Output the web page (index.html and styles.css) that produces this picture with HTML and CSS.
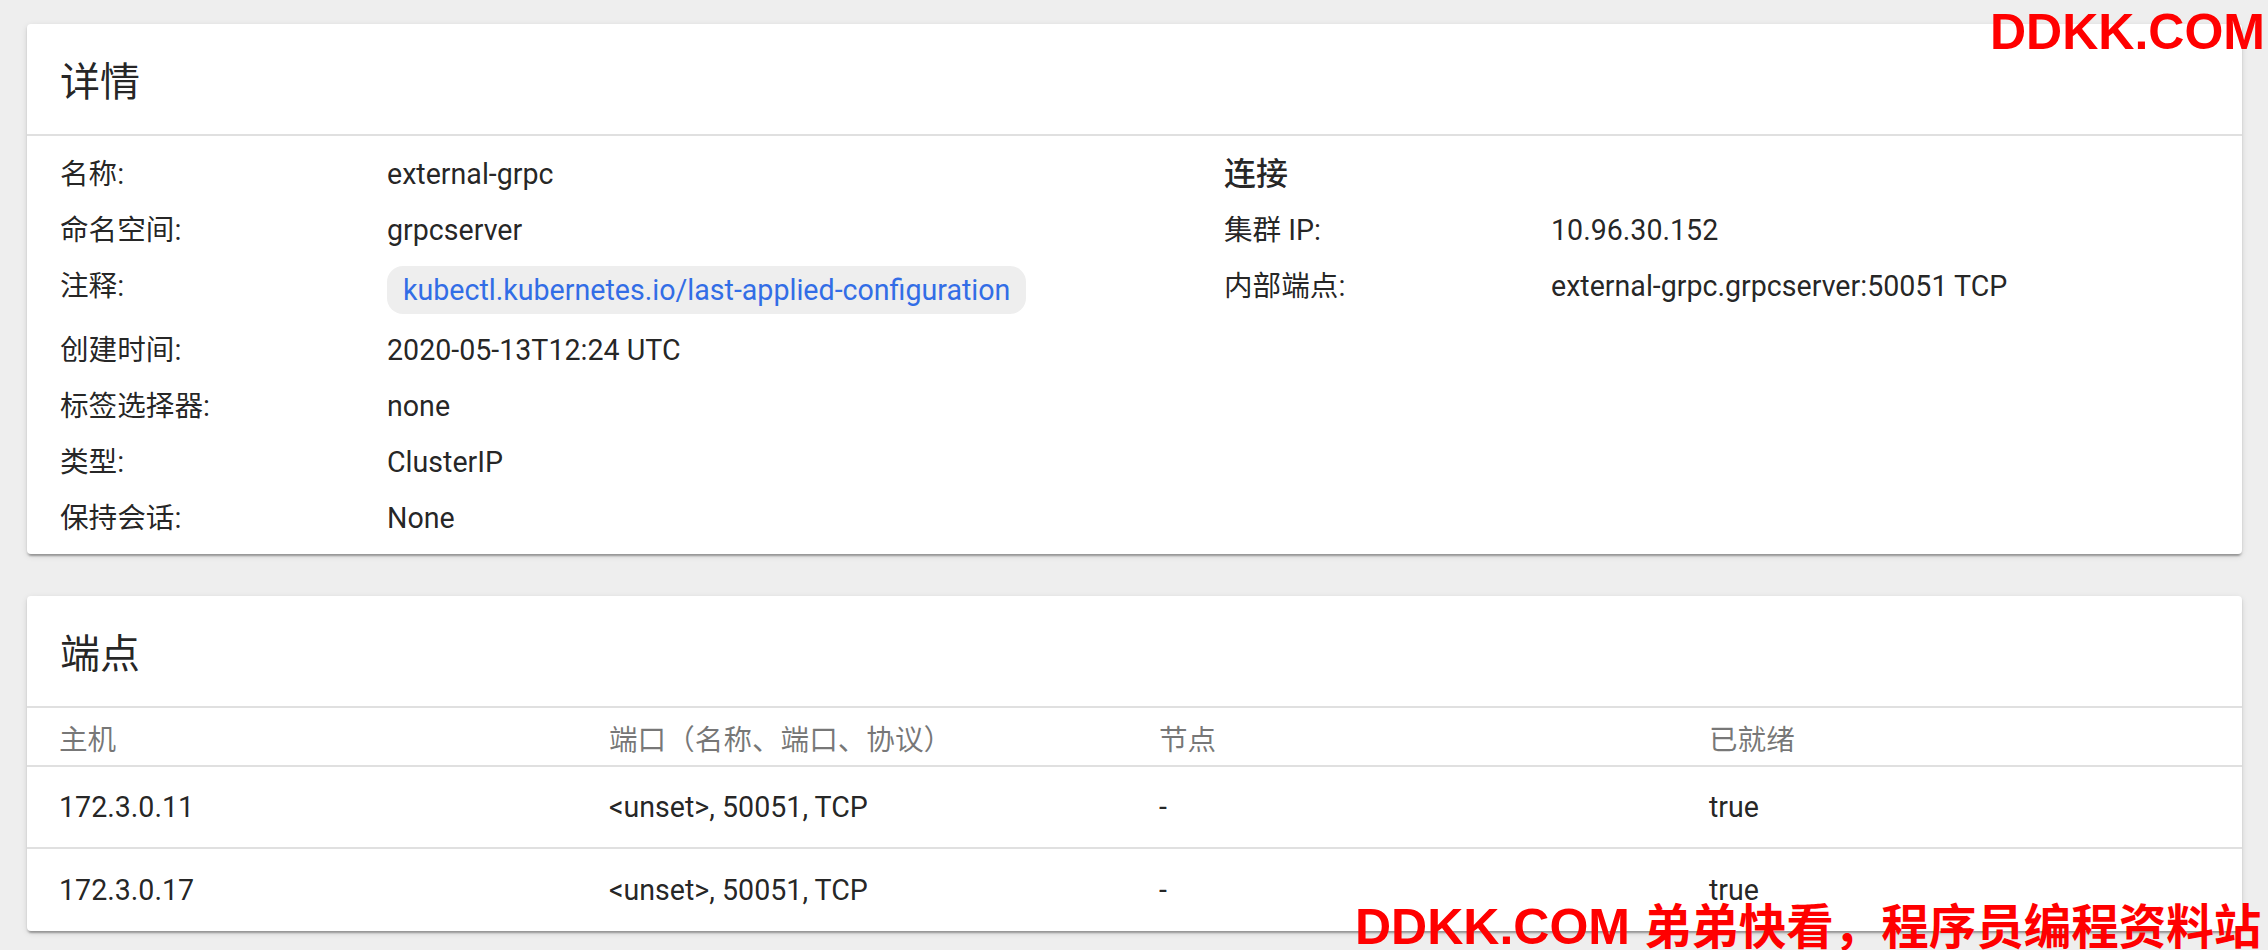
FILE: index.html
```html
<!DOCTYPE html>
<html>

<head>
    <title>external-grpc</title>
    <link rel="stylesheet" href="styles.css">
</head>

<body>
<div class="page">

    <div class="card">
        <div class="card-title">详情</div>
        <div class="details">
            <div class="section">
                <div class="row"><span class="label">名称:</span><span class="value">external-grpc</span></div>
                <div class="row"><span class="label">命名空间:</span><span class="value">grpcserver</span></div>
                <div class="row"><span class="label">注释:</span><span class="value"><span class="chip">kubectl.kubernetes.io/last-applied-configuration</span></span></div>
                <div class="row"><span class="label">创建时间:</span><span class="value">2020-05-13T12:24 UTC</span></div>
                <div class="row"><span class="label">标签选择器:</span><span class="value">none</span></div>
                <div class="row"><span class="label">类型:</span><span class="value">ClusterIP</span></div>
                <div class="row"><span class="label">保持会话:</span><span class="value">None</span></div>
            </div>
            <div class="section">
                <div class="row"><span class="subhead">连接</span></div>
                <div class="row"><span class="label">集群 IP:</span><span class="value">10.96.30.152</span></div>
                <div class="row"><span class="label">内部端点:</span><span class="value">external-grpc.grpcserver:50051 TCP</span></div>
            </div>
        </div>
    </div>

    <div class="card">
        <div class="card-title">端点</div>
        <div class="table">
            <div class="tr th">
                <span>主机</span>
                <span>端口（名称、端口、协议）</span>
                <span>节点</span>
                <span>已就绪</span>
            </div>
            <div class="tr">
                <span>172.3.0.11</span>
                <span>&lt;unset&gt;, 50051, TCP</span>
                <span>-</span>
                <span>true</span>
            </div>
            <div class="tr">
                <span>172.3.0.17</span>
                <span>&lt;unset&gt;, 50051, TCP</span>
                <span>-</span>
                <span>true</span>
            </div>
        </div>
    </div>

</div>

<div class="mark mark-top">DDKK.COM</div>
<div class="mark mark-bottom">DDKK.COM <span class="mark-cn">弟弟快看，程序员编程资料站</span></div>
</body>
</html>
```

FILE: styles.css
```css
* {
    box-sizing: border-box;
}
body, html {
    padding: 0;
    margin: 0;
    overflow: hidden;
}
body {
    position: relative;
    height: 950px;
    background-color: #eeeeee;
    color: rgba(0,0,0,0.87);
    font-family: Roboto, "Noto Sans CJK SC", sans-serif;
    font-size: 28.6px;
}
.page {
    padding: 24px 26px 0 27px;
}
.card {
    background-color: #fff;
    border-radius: 4px;
    box-shadow: 0 4px 2px -2px rgba(0,0,0,0.2), 0 2px 2px 0 rgba(0,0,0,0.14), 0 2px 6px 0 rgba(0,0,0,0.12);
    margin-bottom: 42px;
}
.card-title {
    height: 112px;
    display: flex;
    align-items: center;
    padding: 0 33px;
    font-size: 40px;
    border-bottom: 2px solid #e0e0e0;
}
.details {
    display: grid;
    grid-template-columns: 1164px 1fr;
    padding: 18px 33px 16px;
}
.row {
    display: grid;
    grid-template-columns: 327px 1fr;
    align-items: start;
    line-height: 40px;
    margin-bottom: 16px;
}
.section .row:last-child {
    margin-bottom: 0;
}
.subhead {
    font-size: 32px;
    font-weight: 500;
}
.chip {
    display: inline-block;
    height: 48px;
    line-height: 48px;
    padding: 0 16px;
    border-radius: 16px;
    background-color: #eeeeee;
    color: #326de6;
}
.table {
    padding-top: 1px;
}
.tr {
    display: grid;
    grid-template-columns: 550px 550px 550px 1fr;
    align-items: center;
    height: 82px;
    padding: 0 32px;
    border-bottom: 2px solid #e0e0e0;
}
.tr:last-child {
    border-bottom: 0;
}
.th {
    height: 58px;
    color: rgba(0,0,0,0.54);
}
.mark {
    position: absolute;
    color: #ff0000;
    font-family: "Liberation Sans", "Noto Sans CJK SC", sans-serif;
    font-weight: bold;
    font-size: 50px;
    line-height: 1;
    white-space: nowrap;
}
.mark-cn {
    font-size: 47.5px;
}
.mark-top {
    top: 7px;
    right: 3px;
}
.mark-bottom {
    top: 902px;
    left: 1355px;
}
```
